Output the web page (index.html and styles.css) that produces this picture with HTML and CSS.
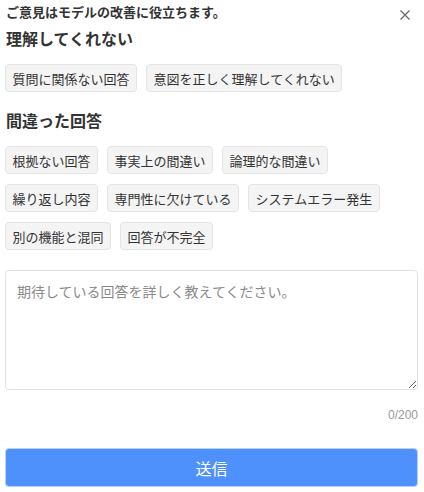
FILE: index.html
```html
<!DOCTYPE html>
<html lang="ja">
<head>
<meta charset="utf-8">
<title>フィードバック</title>
<link rel="stylesheet" href="styles.css">
</head>
<body>
<div class="panel">
  <div class="header">
    <span class="title">ご意見はモデルの改善に役立ちます。</span>
    <span class="close" aria-label="閉じる">
      <svg width="10" height="10" viewBox="0 0 10 10"><path d="M0.5 0.5 L9.5 9.5 M9.5 0.5 L0.5 9.5" stroke="#666" stroke-width="1.2" fill="none"/></svg>
    </span>
  </div>
  <h2 class="section-title first">理解してくれない</h2>
  <div class="chips">
    <span class="chip">質問に関係ない回答</span>
    <span class="chip">意図を正しく理解してくれない</span>
  </div>
  <h2 class="section-title">間違った回答</h2>
  <div class="chips">
    <span class="chip">根拠ない回答</span>
    <span class="chip">事実上の間違い</span>
    <span class="chip">論理的な間違い</span>
    <span class="chip">繰り返し内容</span>
    <span class="chip">専門性に欠けている</span>
    <span class="chip">システムエラー発生</span>
    <span class="chip">別の機能と混同</span>
    <span class="chip">回答が不完全</span>
  </div>
  <textarea class="input" placeholder="期待している回答を詳しく教えてください。"></textarea>
  <div class="counter">0/200</div>
  <button class="submit">送信</button>
</div>
</body>
</html>
```
FILE: styles.css
```css
html, body {
  margin: 0;
  padding: 0;
  background: #fff;
}
body {
  font-family: "Liberation Sans", "Noto Sans CJK JP", sans-serif;
  color: #333;
}
.panel {
  padding: 3px 6px 0 5px;
  display: flex;
  flex-direction: column;
}
.header {
  display: flex;
  justify-content: space-between;
  align-items: center;
  height: 20px;
}
.title {
  font-size: 13px;
  font-weight: bold;
  line-height: 20px;
  padding-left: 1px;
}
.close {
  display: flex;
  width: 10px;
  height: 10px;
  margin-right: 8px;
  margin-top: 4px;
}
.section-title {
  margin: 19px 0 0 1px;
  font-size: 16px;
  font-weight: bold;
  line-height: 22px;
}
.section-title.first {
  margin-top: 6px;
}
.chips {
  display: flex;
  flex-wrap: wrap;
  gap: 10px 9px;
  margin-top: 13px;
}
.chip {
  display: inline-flex;
  align-items: center;
  height: 28px;
  box-sizing: border-box;
  padding: 0 6.5px;
  border: 1px solid #e4e4e4;
  border-radius: 4px;
  background: #f4f4f4;
  font-size: 13px;
  color: #333;
}
.input {
  margin-top: 20px;
  width: 100%;
  height: 120px;
  box-sizing: border-box;
  border: 1px solid #e2e2e2;
  border-radius: 4px;
  padding: 11px;
  font-family: "Liberation Sans", "Noto Sans CJK JP", sans-serif;
  font-size: 14px;
  line-height: 20px;
  color: #333;
  outline: none;
}
.input::placeholder {
  color: #8a8a8a;
}
.counter {
  margin-top: 17px;
  text-align: right;
  font-size: 12px;
  line-height: 16px;
  color: #999;
}
.submit {
  margin-top: 25px;
  height: 39px;
  width: 100%;
  border: 1px solid #b8d1fd;
  border-radius: 4px;
  background: #4f91fc;
  color: #fff;
  font-family: "Liberation Sans", "Noto Sans CJK JP", sans-serif;
  font-size: 16px;
}
```
